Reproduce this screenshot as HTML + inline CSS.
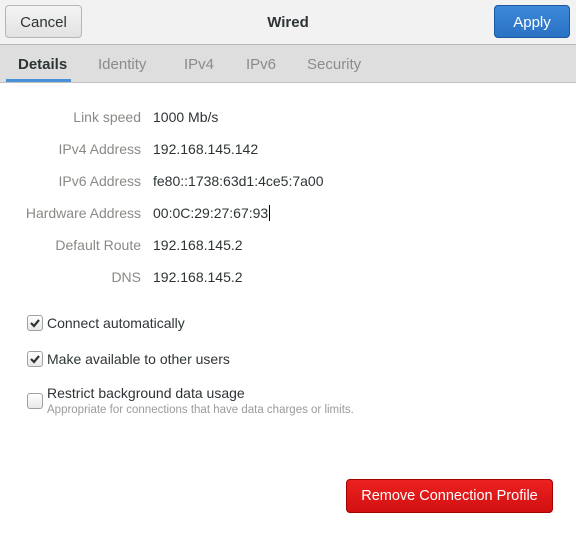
<!DOCTYPE html>
<html><head><style>
body{margin:0;width:576px;height:535px;background:#fff;font-family:"Liberation Sans",sans-serif;font-size:14px;color:#2e3436;position:relative;overflow:hidden}
.hdr{position:absolute;left:0;top:0;width:576px;height:44px;background:#f2f2f2;border-bottom:1px solid #b8b8b8}
.btn{position:absolute;border-radius:4px;text-align:center;font-size:15px;box-sizing:border-box}
.tabs{position:absolute;left:0;top:45px;width:576px;height:37px;background:#dedede;border-bottom:1px solid #c0c0c0}
.tab{position:absolute;top:11px;font-size:15px;color:#8a8c8c}
.lbl{position:absolute;right:435px;color:#888a85;white-space:nowrap}
.val{position:absolute;left:153px;white-space:nowrap}
.cb{position:absolute;left:27px;width:16px;height:16px;border:1px solid #a0a0a0;border-radius:3px;background:linear-gradient(#fff,#e8e8e8);box-sizing:border-box}
.cbt{position:absolute;left:47px;font-size:14px}
</style></head><body>
<div class="hdr">
<div class="btn" style="left:5px;top:5px;width:77px;height:33px;border:1px solid #b6b6b3;background:linear-gradient(#f4f4f4,#e2e2e2);line-height:33px;color:#2e3436">Cancel</div>
<div style="position:absolute;left:0;width:576px;top:14px;text-align:center;font-weight:bold;font-size:15px">Wired</div>
<div class="btn" style="left:494px;top:5px;width:76px;height:33px;border:1px solid #1b5aa3;background:linear-gradient(#3d88d8,#2a72c4);line-height:33px;color:#fff">Apply</div>
</div>
<div class="tabs">
<div class="tab" style="left:18px;color:#2e3436;font-weight:bold">Details</div>
<div style="position:absolute;left:6px;top:34px;width:65px;height:3px;background:#4a90d9"></div>
<div class="tab" style="left:98px">Identity</div>
<div class="tab" style="left:184px">IPv4</div>
<div class="tab" style="left:246px">IPv6</div>
<div class="tab" style="left:307px">Security</div>
</div>
<div class="lbl" style="top:109px">Link speed</div><div class="val" style="top:109px">1000 Mb/s</div>
<div class="lbl" style="top:141px">IPv4 Address</div><div class="val" style="top:141px">192.168.145.142</div>
<div class="lbl" style="top:173px">IPv6 Address</div><div class="val" style="top:173px">fe80::1738:63d1:4ce5:7a00</div>
<div class="lbl" style="top:205px">Hardware Address</div><div class="val" style="top:205px">00:0C:29:27:67:93<span style="border-left:1px solid #000;margin-left:1px"></span></div>
<div class="lbl" style="top:237px">Default Route</div><div class="val" style="top:237px">192.168.145.2</div>
<div class="lbl" style="top:269px">DNS</div><div class="val" style="top:269px">192.168.145.2</div>
<div class="cb" style="top:315px"><svg width="14" height="14" viewBox="0 0 14 14"><path d="M3 7l3 3 5-6" stroke="#2e3436" stroke-width="2.2" fill="none"/></svg></div>
<div class="cbt" style="top:315px">Connect automatically</div>
<div class="cb" style="top:351px"><svg width="14" height="14" viewBox="0 0 14 14"><path d="M3 7l3 3 5-6" stroke="#2e3436" stroke-width="2.2" fill="none"/></svg></div>
<div class="cbt" style="top:351px">Make available to other users</div>
<div class="cb" style="top:393px"></div>
<div class="cbt" style="top:385px">Restrict background data usage</div>
<div style="position:absolute;left:47px;top:404px;font-size:11.5px;color:#9a9c98">Appropriate for connections that have data charges or limits.</div>
<div class="btn" style="left:346px;top:479px;width:207px;height:34px;border:1px solid #a40000;background:linear-gradient(#ec2121,#d11010);line-height:33px;color:#fff;font-size:14.5px">Remove Connection Profile</div>
</body></html>
